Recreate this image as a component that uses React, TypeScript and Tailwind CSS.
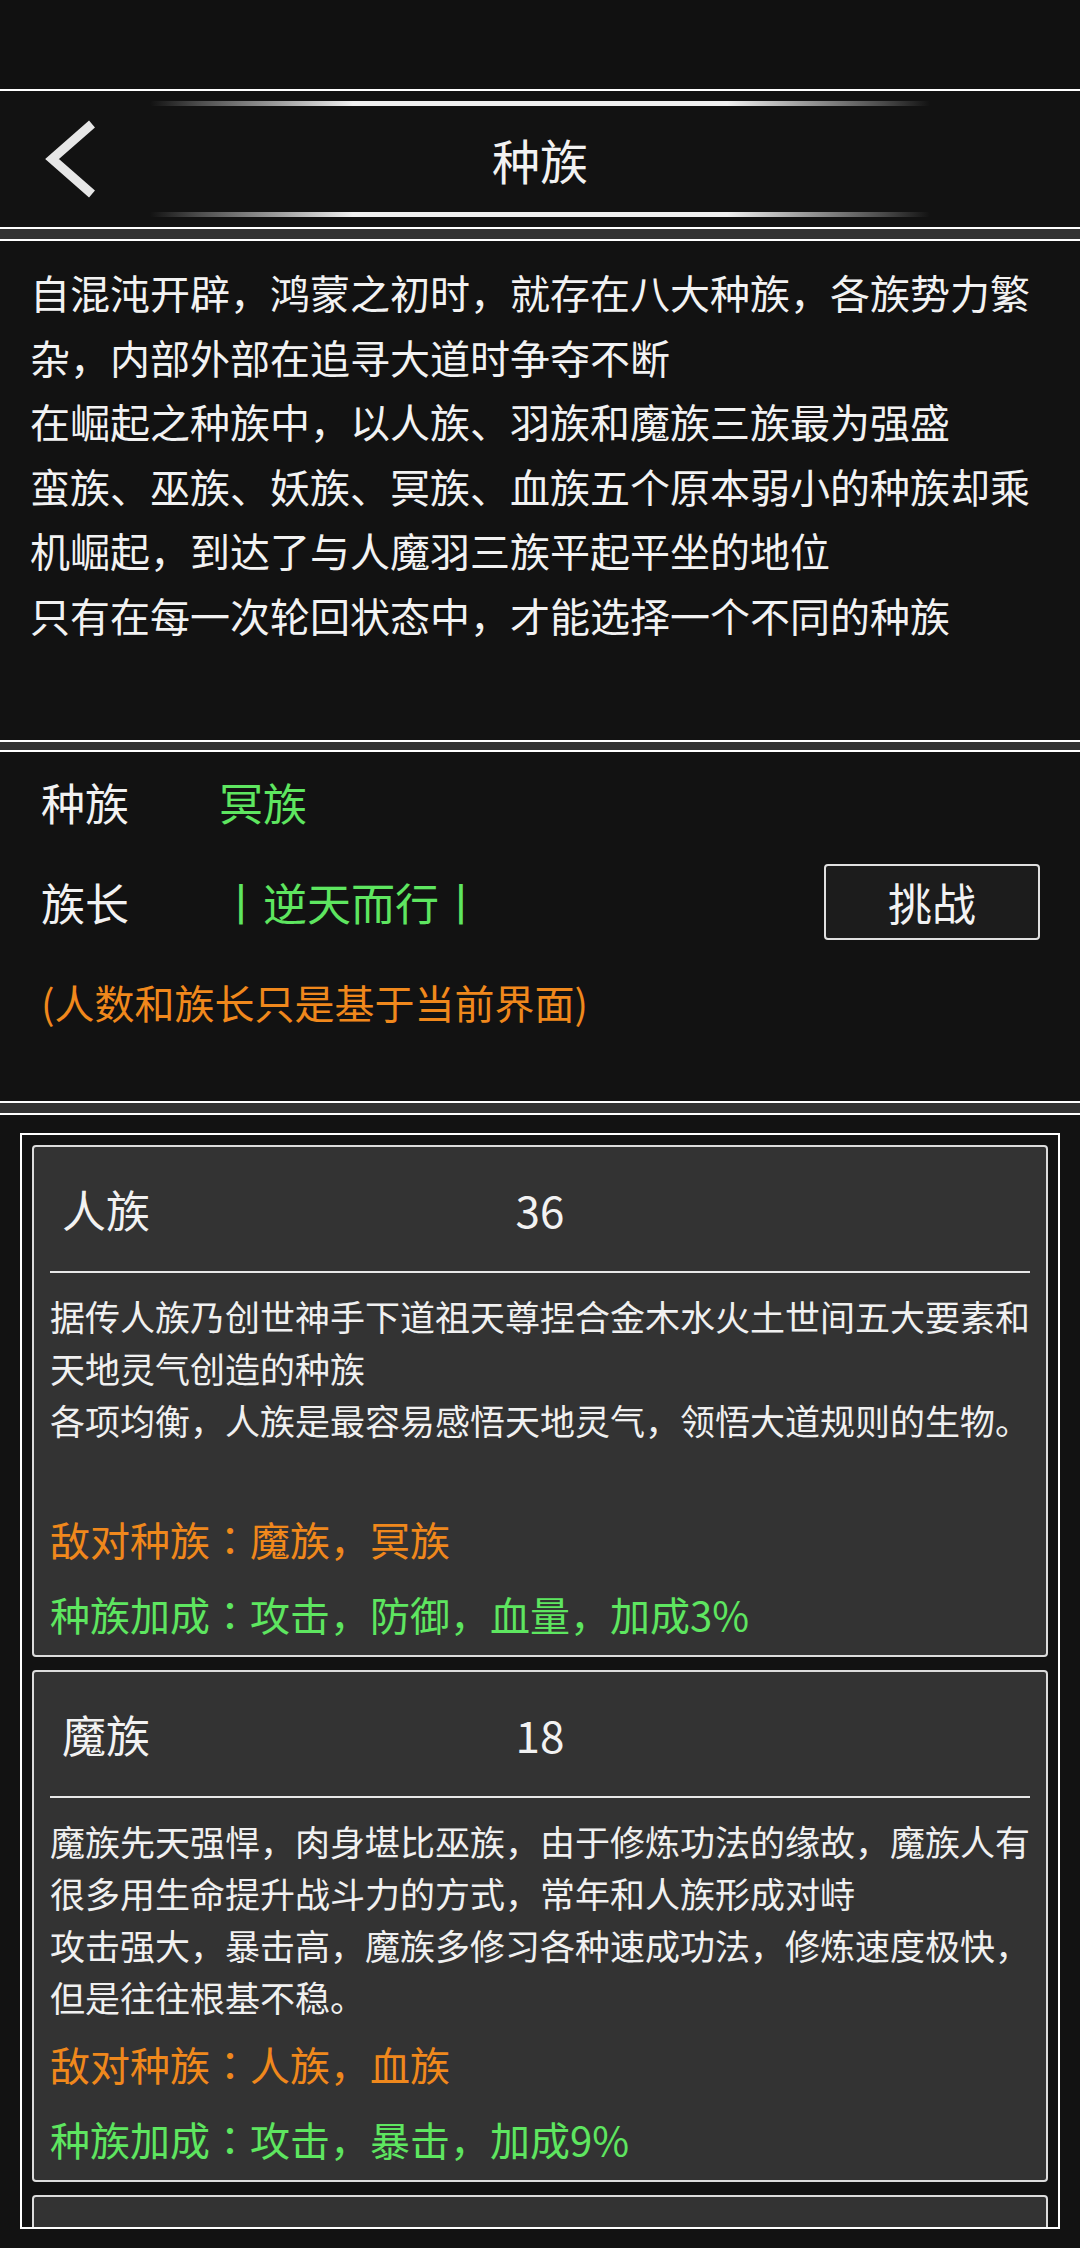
const races = [
  {
    name: "人族",
    count: 36,
    lines: [
      "据传人族乃创世神手下道祖天尊捏合金木水火土世间五大要素和",
      "天地灵气创造的种族",
      "各项均衡，人族是最容易感悟天地灵气，领悟大道规则的生物。",
      "",
    ],
    enemy: "魔族，冥族",
    bonus: "攻击，防御，血量，加成3%",
  },
  {
    name: "魔族",
    count: 18,
    lines: [
      "魔族先天强悍，肉身堪比巫族，由于修炼功法的缘故，魔族人有",
      "很多用生命提升战斗力的方式，常年和人族形成对峙",
      "攻击强大，暴击高，魔族多修习各种速成功法，修炼速度极快，",
      "但是往往根基不稳。",
    ],
    enemy: "人族，血族",
    bonus: "攻击，暴击，加成9%",
  },
];

const intro = [
  "自混沌开辟，鸿蒙之初时，就存在八大种族，各族势力繁",
  "杂，内部外部在追寻大道时争夺不断",
  "在崛起之种族中，以人族、羽族和魔族三族最为强盛",
  "蛮族、巫族、妖族、冥族、血族五个原本弱小的种族却乘",
  "机崛起，到达了与人魔羽三族平起平坐的地位",
  "只有在每一次轮回状态中，才能选择一个不同的种族",
];

function GlowLine() {
  return (
    <div className="mx-auto h-[5px] w-[780px] rounded-full bg-[linear-gradient(90deg,rgba(255,255,255,0)_0%,#4a4a4a_6%,#9a9a9a_16%,#f0f0f0_26%,#f0f0f0_74%,#9a9a9a_84%,#4a4a4a_94%,rgba(255,255,255,0)_100%)]" />
  );
}

// centred full-width colon, as in the game's font
function Colon() {
  return <span className="font-['Noto_Sans_CJK_JP',sans-serif]">：</span>;
}

function RaceCard({ race }: { race: (typeof races)[number] }) {
  return (
    <div className="shrink-0 rounded-[4px] border-2 border-[#dcdcdc] bg-[#333333] pb-[3px]">
      <div className="grid h-[124px] grid-cols-[1fr_auto_1fr] items-center text-[44px] text-[#f2f2f2]">
        <span className="pl-[28px]">{race.name}</span>
        <span>{race.count}</span>
        <span />
      </div>
      <div className="mx-[16px] h-[2px] bg-[#e8e8e8]" />
      <div className="px-[16px] pt-[17px] text-[35px] leading-[52px] text-[#f0f0f0]">
        {race.lines.map((line, i) => (
          <div key={i} className="h-[52px] whitespace-nowrap">
            {line}
          </div>
        ))}
      </div>
      <div className="mt-[4px] whitespace-nowrap px-[16px] text-[40px] leading-[75px] text-[#f0881c]">
        敌对种族<Colon />
        {race.enemy}
      </div>
      <div className="whitespace-nowrap px-[16px] text-[40px] leading-[75px] text-[#5ee660]">
        种族加成<Colon />
        {race.bonus}
      </div>
    </div>
  );
}

export default function App() {
  return (
    <div className="flex h-[2248px] w-full flex-col overflow-hidden bg-[#333333] font-['Noto_Sans_CJK_SC','Noto_Sans',sans-serif]">
      <div className="h-[89px] shrink-0 bg-[#111111]" />

      <header className="flex h-[140px] shrink-0 flex-col justify-between border-y-2 border-white bg-[#121212] py-[10px]">
        <GlowLine />
        <div className="grid grid-cols-[1fr_auto_1fr] items-center">
          <div className="pl-[40px]">
            <svg width="60" height="82" viewBox="0 0 60 82" fill="none">
              <polyline
                points="52,6 12,41 52,76"
                stroke="#e6e6e6"
                strokeWidth="9"
                strokeLinecap="butt"
                strokeLinejoin="miter"
              />
            </svg>
          </div>
          <h1 className="text-[48px] text-[#f2f2f2]">种族</h1>
          <div />
        </div>
        <GlowLine />
      </header>

      <div className="h-[10px] shrink-0" />

      <section className="h-[503px] shrink-0 border-y-2 border-white bg-[#121212] px-[30px] pt-[19px] text-[40px] leading-[64.5px] text-[#f2f2f2]">
        {intro.map((line) => (
          <div key={line} className="whitespace-nowrap">
            {line}
          </div>
        ))}
      </section>

      <div className="h-[8px] shrink-0" />

      <section className="h-[353px] shrink-0 border-y-2 border-white bg-[#121212] pl-[41px] pr-[40px]">
        <div className="flex h-[100px] items-center text-[44px]">
          <span className="w-[178px] text-[#f2f2f2]">种族</span>
          <span className="text-[#5ee660]">冥族</span>
        </div>
        <div className="flex h-[100px] items-center text-[44px]">
          <span className="w-[178px] text-[#f2f2f2]">族长</span>
          <span className="text-[#5ee660]">丨逆天而行丨</span>
          <button className="ml-auto flex h-[76px] w-[216px] items-center justify-center rounded-[4px] border-2 border-[#e0e0e0] bg-[#1c1c1c] text-[44px] text-[#f2f2f2]">
            挑战
          </button>
        </div>
        <div className="flex h-[100px] items-center text-[40px] text-[#f0881c]">
          (人数和族长只是基于当前界面)
        </div>
      </section>

      <div className="h-[10px] shrink-0" />

      <section className="flex-1 border-t-2 border-white bg-[#121212] px-[20px] pt-[18px]">
        <div className="flex h-[1096px] flex-col gap-[13px] overflow-hidden border-2 border-white p-[10px]">
          {races.map((race) => (
            <RaceCard key={race.name} race={race} />
          ))}
          {/* next entry, scrolled just into view */}
          <div className="h-[124px] shrink-0 rounded-[4px] border-2 border-[#dcdcdc] bg-[#333333]" />
        </div>
      </section>
    </div>
  );
}
